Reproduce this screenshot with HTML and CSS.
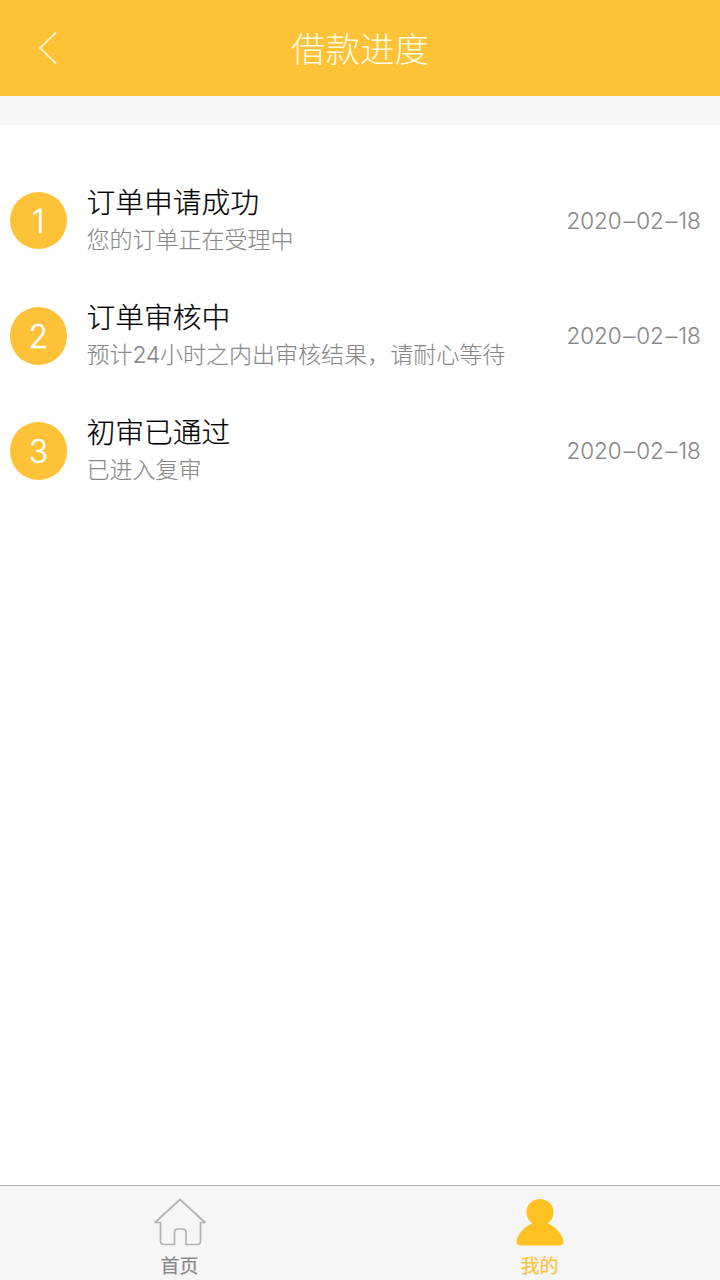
FILE: index.html
```html
<!DOCTYPE html>
<html lang="zh-CN">
<head>
<meta charset="utf-8">
<title>借款进度</title>
<link rel="stylesheet" href="styles.css">
</head>
<body>
<div class="page">
  <header class="header">
    <svg class="back" viewBox="0 0 20 34" aria-hidden="true"><path d="M18 1.500 2 17 18 32.500"/></svg>
    <h1 class="title">借款进度</h1>
  </header>
  <main class="content">
    <ol class="steps">
      <li class="step">
        <span class="number">1</span>
        <div class="text"><h2 class="name">订单申请成功</h2><p class="note">您的订单正在受理中</p></div>
        <time class="date">2020<span class="dash">-</span>02<span class="dash">-</span>18</time>
      </li>
      <li class="step">
        <span class="number">2</span>
        <div class="text"><h2 class="name">订单审核中</h2><p class="note">预计<span class="digits">24</span>小时之内出审核结果，请耐心等待</p></div>
        <time class="date">2020<span class="dash">-</span>02<span class="dash">-</span>18</time>
      </li>
      <li class="step">
        <span class="number">3</span>
        <div class="text"><h2 class="name">初审已通过</h2><p class="note">已进入复审</p></div>
        <time class="date">2020<span class="dash">-</span>02<span class="dash">-</span>18</time>
      </li>
    </ol>
  </main>
  <nav class="tabs">
    <a class="tab">
      <svg class="icon home" viewBox="0 0 54 48" aria-hidden="true"><path d="M27 1.500 52 24.500H47.500V43Q47.500 46.500 44 46.500H33V34.500Q33 31 29.500 31H25Q21.500 31 21.500 34.500V46.500H11Q7.500 46.500 7.500 43V24.500H2Z"/></svg>
      <span class="label">首页</span>
    </a>
    <a class="tab active">
      <svg class="icon user" viewBox="0 0 54 48" aria-hidden="true"><path d="M27 1C34.500 1 40.500 6.500 40.500 14C40.500 19 38.500 22.500 34.500 25.500C41 27 49.500 36 50.500 43Q50.500 47.500 46.500 47.500H7.500Q3.500 47.500 3.500 43C4.500 36 13 27 19.500 25.500C15.500 22.500 13.500 19 13.500 14C13.500 6.500 19.500 1 27 1Z"/></svg>
      <span class="label">我的</span>
    </a>
  </nav>
</div>
</body>
</html>
```

FILE: styles.css
```css
* { box-sizing: border-box; }
body {
  margin: 0;
  font-family: "Noto Sans CJK SC", sans-serif;
  font-weight: 300;
}
.page {
  display: flex;
  flex-direction: column;
  height: 1280px;
  background: #fff;
}
.header {
  display: grid;
  grid-template-columns: 96px 1fr 96px;
  align-items: center;
  height: 96px;
  background: #fec239;
  color: #fffbe0;
}
.back {
  width: 20px;
  height: 34px;
  margin: 0 0 1px 38px;
  fill: none;
  stroke: #fff6cf;
  stroke-width: 1.8;
}
.title {
  margin: 0;
  padding-bottom: 2px;
  text-align: center;
  font-size: 34.5px;
  font-weight: 300;
  line-height: 94px;
}
.content {
  flex: 1;
  border-top: 29px solid #f5f6f8;
  padding-top: 38px;
}
.steps {
  margin: 0;
  padding: 0;
  list-style: none;
}
.step {
  display: flex;
  align-items: center;
  height: 115.2px;
  padding: 0 19.2px 0 9.6px;
}
.number {
  width: 57.6px;
  height: 57.6px;
  border-radius: 50%;
  background: #fec239;
  color: #fff;
  font: 300 32px/60px Inter, "Liberation Sans", sans-serif;
  text-align: center;
  -webkit-text-stroke: 0.3px #fff;
}
.text {
  flex: 1;
  margin-left: 19.2px;
  padding-bottom: 3px;
}
.name {
  margin: 0;
  color: #000;
  font-size: 28.8px;
  font-weight: 300;
  line-height: 38px;
  -webkit-text-stroke: 0.2px #000;
}
.note {
  margin: 0;
  color: #888;
  font-size: 23.04px;
  line-height: 36px;
  -webkit-text-stroke: 0.1px #888;
}
.digits {
  font-family: Inter, sans-serif;
  line-height: 1;
  letter-spacing: -0.4px;
}
.date {
  color: #888;
  font: 300 22.4px/36px Inter, "Liberation Sans", sans-serif;
  -webkit-text-stroke: 0.1px #888;
}
.dash {
  display: inline-block;
  width: 14.6px;
  text-align: center;
  transform: scaleX(1.75);
}
.tabs {
  display: flex;
  height: 95px;
  border-top: 1px solid #b0b0b0;
  background: #f6f6f6;
}
.tab {
  display: flex;
  flex: 1;
  flex-direction: column;
  align-items: center;
  padding: 12px 1px 0 0;
  color: #888;
}
.icon { width: 54px; height: 48px; }
.home { fill: none; stroke: #b3b3b3; stroke-width: 1.7; stroke-linejoin: round; }
.user { fill: #fec222; }
.label {
  margin-top: 5px;
  font-size: 19px;
  font-weight: 400;
  line-height: 28px;
  -webkit-text-stroke: 0.2px currentColor;
}
.active { color: #fec239; }
```
